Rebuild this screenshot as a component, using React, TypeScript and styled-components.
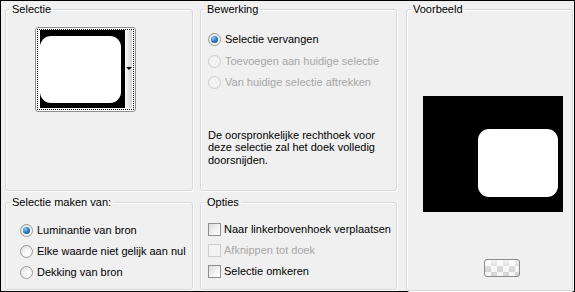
import styled, { createGlobalStyle } from "styled-components";

const GlobalStyle = createGlobalStyle`
  html, body {
    margin: 0;
    padding: 0;
    background: #f0f0f0;
  }
  body {
    font-family: "Liberation Sans", Arial, sans-serif;
    font-size: 11px;
    color: #000000;
  }
`;

// Dialog frame
const Dialog = styled.div`
  box-sizing: border-box;
  display: flex;
  width: 575px;
  height: 292px;
  padding: 2px 1px 1px 4px;
  background: #f0f0f0;
  border: 1px solid #000000;
`;

const Panes = styled.div`
  display: grid;
  grid-template-columns: 188px 197px;
  grid-template-rows: 188px 94px;
  column-gap: 7px;
  row-gap: 5px;
`;

const Group = styled.fieldset`
  box-sizing: border-box;
  margin: 0;
  min-width: 0;
  padding: 0;
  border: 1px solid #d5d8dc;
  border-radius: 3px;
  box-shadow: 1px 1px 0 #ffffff, inset 1px 1px 0 #ffffff;
`;

const PreviewGroup = styled(Group)`
  width: 167px;
  height: 288px;
  margin-left: 9px;
`;

const Legend = styled.legend`
  margin-left: 4px;
  padding: 0 2px;
  line-height: 13px;
  color: #000000;
`;

const GroupBody = styled.div<{ $padX?: number; $padTop?: number }>`
  padding: ${(p) => p.$padTop ?? 0}px ${(p) => p.$padX ?? 7}px 0;
`;

// Thumbnail dropdown
const Thumb = styled.button`
  display: block;
  box-sizing: border-box;
  width: 101px;
  height: 85px;
  margin-left: 29px;
  padding: 1px;
  background: #ffffff;
  border: 1px solid #8e8e8e;
  border-radius: 3px;
`;

const FocusFrame = styled.div`
  box-sizing: border-box;
  display: flex;
  height: 100%;
  padding: 0 1px 1px 2px;
  border: 1px dotted #000000;
`;

const DropStrip = styled.div`
  position: relative;
  width: 7px;
  background: linear-gradient(to right, #fafafa, #d4d4d4);
`;

const DropArrow = styled.span`
  position: absolute;
  top: 37px;
  left: 1px;
  width: 0;
  height: 0;
  border-left: 3px solid transparent;
  border-right: 3px solid transparent;
  border-top: 3px solid #000000;
`;

// Options
const OptionList = styled.div<{ $rowHeight: number }>`
  display: flex;
  flex-direction: column;
  & > * {
    height: ${(p) => p.$rowHeight}px;
  }
`;

const Option = styled.label<{ $disabled?: boolean; $gap: number }>`
  display: flex;
  align-items: center;
  gap: ${(p) => p.$gap}px;
  line-height: 13px;
  white-space: nowrap;
  color: ${(p) => (p.$disabled ? "#a7a7a7" : "#000000")};
`;

const Radio = styled.span<{ $checked?: boolean; $disabled?: boolean }>`
  position: relative;
  box-sizing: border-box;
  flex: none;
  width: 13px;
  height: 13px;
  border-radius: 50%;
  border: 1px solid ${(p) => (p.$disabled ? "#cdcdcd" : "#9a9a9a")};
  background: ${(p) =>
    p.$disabled
      ? "#f2f2f2"
      : "radial-gradient(circle at 65% 70%, #ffffff 0%, #f4f4f4 45%, #d6d6d6 100%)"};

  &::after {
    content: "";
    display: ${(p) => (p.$checked ? "block" : "none")};
    position: absolute;
    left: 2px;
    top: 2px;
    width: 7px;
    height: 7px;
    border-radius: 50%;
    background: radial-gradient(circle at 35% 30%, #8cc8f6 0%, #2f7fc8 45%, #0d3e78 100%);
  }
`;

const Checkbox = styled.span<{ $disabled?: boolean }>`
  box-sizing: border-box;
  flex: none;
  width: 13px;
  height: 13px;
  border: 1px solid ${(p) => (p.$disabled ? "#cfcfcf" : "#8f8f8f")};
  background: ${(p) =>
    p.$disabled ? "#f3f3f3" : "linear-gradient(135deg, #dcdcdc 0%, #f4f4f4 60%, #ffffff 100%)"};
`;

const Note = styled.p`
  margin: 35px 0 0;
  line-height: 12.5px;
`;

// Preview
const PreviewImage = styled.svg`
  display: block;
  margin: 80px 0 0 16px;
`;

const TransparencyButton = styled.button`
  display: block;
  box-sizing: border-box;
  width: 36px;
  height: 18px;
  margin: 47px 0 0 77px;
  padding: 0;
  border: 1px solid #8a8a8a;
  border-radius: 3px;
  background:
    linear-gradient(to bottom, rgba(255, 255, 255, 0.65), rgba(255, 255, 255, 0) 60%),
    repeating-conic-gradient(#d6d6d6 0 25%, #f6f6f6 0 50%) 0 0 / 12px 12px;
`;

const bewerking = [
  { label: "Selectie vervangen", checked: true },
  { label: "Toevoegen aan huidige selectie", disabled: true },
  { label: "Van huidige selectie aftrekken", disabled: true },
];

const bron = [
  { label: "Luminantie van bron", checked: true },
  { label: "Elke waarde niet gelijk aan nul" },
  { label: "Dekking van bron" },
];

const opties = [
  { label: "Naar linkerbovenhoek verplaatsen" },
  { label: "Afknippen tot doek", disabled: true },
  { label: "Selectie omkeren" },
];

export default function App() {
  return (
    <>
      <GlobalStyle />
      <Dialog>
        <Panes>
          <Group>
            <Legend>Selectie</Legend>
            <GroupBody $padTop={11} $padX={0}>
              <Thumb type="button">
                <FocusFrame>
                  <svg width="85" height="78" viewBox="0 0 85 78">
                    <rect width="85" height="78" fill="#000000" />
                    <rect x="0" y="6" width="81" height="67" rx="11" fill="#ffffff" />
                  </svg>
                  <DropStrip>
                    <DropArrow />
                  </DropStrip>
                </FocusFrame>
              </Thumb>
            </GroupBody>
          </Group>

          <Group>
            <Legend>Bewerking</Legend>
            <GroupBody $padTop={13}>
              <OptionList $rowHeight={21.5}>
                {bewerking.map((o) => (
                  <Option key={o.label} $gap={4} $disabled={o.disabled}>
                    <Radio $checked={o.checked} $disabled={o.disabled} />
                    {o.label}
                  </Option>
                ))}
              </OptionList>
              <Note>
                De oorspronkelijke rechthoek voor
                <br />
                deze selectie zal het doek volledig
                <br />
                doorsnijden.
              </Note>
            </GroupBody>
          </Group>

          <Group>
            <Legend>Selectie maken van:</Legend>
            <GroupBody $padTop={11} $padX={14}>
              <OptionList $rowHeight={21}>
                {bron.map((o) => (
                  <Option key={o.label} $gap={4}>
                    <Radio $checked={o.checked} />
                    {o.label}
                  </Option>
                ))}
              </OptionList>
            </GroupBody>
          </Group>

          <Group>
            <Legend>Opties</Legend>
            <GroupBody $padTop={10}>
              <OptionList $rowHeight={21}>
                {opties.map((o) => (
                  <Option key={o.label} $gap={3} $disabled={o.disabled}>
                    <Checkbox $disabled={o.disabled} />
                    {o.label}
                  </Option>
                ))}
              </OptionList>
            </GroupBody>
          </Group>
        </Panes>

        <PreviewGroup>
          <Legend>Voorbeeld</Legend>
          <PreviewImage width="140" height="116" viewBox="0 0 140 116">
            <rect width="140" height="116" fill="#000000" />
            <rect x="55" y="33" width="80" height="68" rx="11" fill="#ffffff" />
          </PreviewImage>
          <TransparencyButton type="button" aria-label="Transparantie" />
        </PreviewGroup>
      </Dialog>
    </>
  );
}
